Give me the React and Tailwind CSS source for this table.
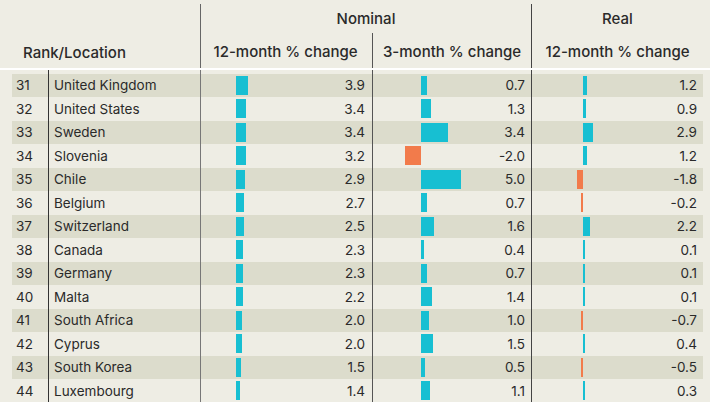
import React from "react";

const rows = [
  [31, "United Kingdom", 3.9, 0.7, 1.2],
  [32, "United States", 3.4, 1.3, 0.9],
  [33, "Sweden", 3.4, 3.4, 2.9],
  [34, "Slovenia", 3.2, -2.0, 1.2],
  [35, "Chile", 2.9, 5.0, -1.8],
  [36, "Belgium", 2.7, 0.7, -0.2],
  [37, "Switzerland", 2.5, 1.6, 2.2],
  [38, "Canada", 2.3, 0.4, 0.1],
  [39, "Germany", 2.3, 0.7, 0.1],
  [40, "Malta", 2.2, 1.4, 0.1],
  [41, "South Africa", 2.0, 1.0, -0.7],
  [42, "Cyprus", 2.0, 1.5, 0.4],
  [43, "South Korea", 1.5, 0.5, -0.5],
  [44, "Luxembourg", 1.4, 1.1, 0.3],
];

function Bar({ value, scale }) {
  const w = Math.max(Math.round(Math.abs(value) * scale), 2);
  return (
    <div
      className={value < 0 ? "h-[19px] bg-[#f27b4b]" : "h-[19px] bg-[#17bfd2]"}
      style={{ width: `${w}px` }}
    />
  );
}

function BarCell({ value, scale, base, width, pr, border }) {
  return (
    <div className={`flex items-center h-full ${width} ${border}`}>
      <div className={`flex justify-end shrink-0 ${base}`}>
        {value < 0 && <Bar value={value} scale={scale} />}
      </div>
      <div className="flex-1 flex">
        {value >= 0 && <Bar value={value} scale={scale} />}
      </div>
      <div className={`shrink-0 text-right ${pr}`}>{value.toFixed(1)}</div>
    </div>
  );
}

export default function App() {
  return (
    <div
      className="w-[710px] h-[402px] overflow-hidden bg-[#eeede4] text-[#2a2a2a]"
      style={{ fontFamily: "Inter, 'Liberation Sans', sans-serif" }}
    >
      {/* Header */}
      <div className="flex h-[68px] text-[15px] font-medium">
        <div className="w-[200px] flex items-end">
          <div className="h-[33px] flex items-center pl-[23px] pt-[4px]">Rank/Location</div>
        </div>
        <div className="w-[331px] mt-[4px] border-l border-[#666] flex flex-col">
          <div className="h-[29px] flex items-center justify-center pt-[1px]">Nominal</div>
          <div className="flex-1 flex">
            <div className="w-[171px] flex items-center justify-center pr-[2px] pt-[4px]">12-month % change</div>
            <div className="flex-1 border-l border-[#555] flex items-center justify-center pt-[4px]">3-month % change</div>
          </div>
        </div>
        <div className="w-[172px] mt-[4px] border-l border-[#444] flex flex-col">
          <div className="h-[29px] flex items-center justify-center pt-[1px]">Real</div>
          <div className="flex-1 flex items-center justify-center pt-[4px]">12-month % change</div>
        </div>
      </div>
      <div className="h-[2px] bg-white" />
      {/* Body */}
      <div className="text-[13.5px]">
        <div className="flex h-[3.5px] pl-[12px]">
          <div className="w-[36px]" />
          <div className="w-[152px] border-l border-[#333]" />
          <div className="w-[172px] border-l border-[#777]" />
          <div className="w-[159px] border-l border-[#555]" />
          <div className="w-[172px] border-l border-[#444]" />
        </div>
        {rows.map(([rank, name, a, b, c], i) => (
          <div key={rank} className="pl-[12px] flex">
            <div
              className={`flex h-[23.5px] w-[691px] items-center ${
                i % 2 === 0 ? "bg-[#dcdccc]" : ""
              }`}
            >
              <div className="w-[36px] pl-[4px]">{rank}</div>
              <div className="w-[152px] h-full border-l border-[#333] flex items-center pl-[5px]">
                {name}
              </div>
              <BarCell value={a} scale={3} base="w-[35px]" width="w-[172px]" pr="pr-[7px]" border="border-l border-[#777]" />
              <BarCell value={b} scale={8} base="w-[48px]" width="w-[159px]" pr="pr-[6px]" border="border-l border-[#555]" />
              <BarCell value={c} scale={3.3} base="w-[51px]" width="w-[172px]" pr="pr-[6px]" border="border-l border-[#444]" />
            </div>
          </div>
        ))}
      </div>
    </div>
  );
}
